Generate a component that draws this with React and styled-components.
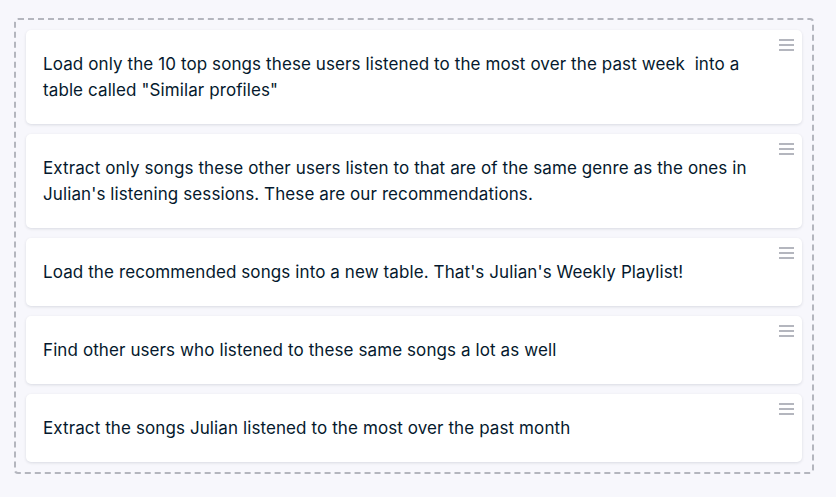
import React from "react";
import styled, { createGlobalStyle } from "styled-components";

const Global = createGlobalStyle`
  html, body { margin: 0; padding: 0; background: #f7f7fc; }
  body { font-family: Inter, "Noto Sans", sans-serif; color: #05192d; }
`;

const Page = styled.div`
  padding: 18px 0 0 14px;
`;

const List = styled.div`
  width: 800px;
  box-sizing: border-box;
  border: 2px dashed #b4b6be;
  border-radius: 4px;
  padding: 10px;
  display: flex;
  flex-direction: column;
  gap: 10px;
`;

const Card = styled.div`
  position: relative;
  background: #ffffff;
  border-radius: 5px;
  box-shadow: 0 1px 3px rgba(5, 25, 45, 0.12);
  padding: 21px 40px 21px 17px;
  font-size: 17px;
  letter-spacing: 0.1px;
  line-height: 26px;
  color: #05192d;
`;

const Handle = styled.svg`
  position: absolute;
  top: 9px;
  right: 8px;
  width: 15px;
  height: 12px;
`;

const DragHandle = () => (
  <Handle viewBox="0 0 15 12">
    <rect x="0" y="0" width="15" height="2" fill="#b4b6be" />
    <rect x="0" y="5" width="15" height="2" fill="#b4b6be" />
    <rect x="0" y="10" width="15" height="2" fill="#b4b6be" />
  </Handle>
);

const items = [
  "Load only the 10 top songs these users listened to the most over the past week \u00a0into a table called \"Similar profiles\"",
  "Extract only songs these other users listen to that are of the same genre as the ones in Julian's listening sessions. These are our recommendations.",
  "Load the recommended songs into a new table. That's Julian's Weekly Playlist!",
  "Find other users who listened to these same songs a lot as well",
  "Extract the songs Julian listened to the most over the past month",
];

export default function App() {
  return (
    <>
      <Global />
      <Page>
        <List>
          {items.map((t, i) => (
            <Card key={i}>
              <DragHandle />
              {t}
            </Card>
          ))}
        </List>
      </Page>
    </>
  );
}
